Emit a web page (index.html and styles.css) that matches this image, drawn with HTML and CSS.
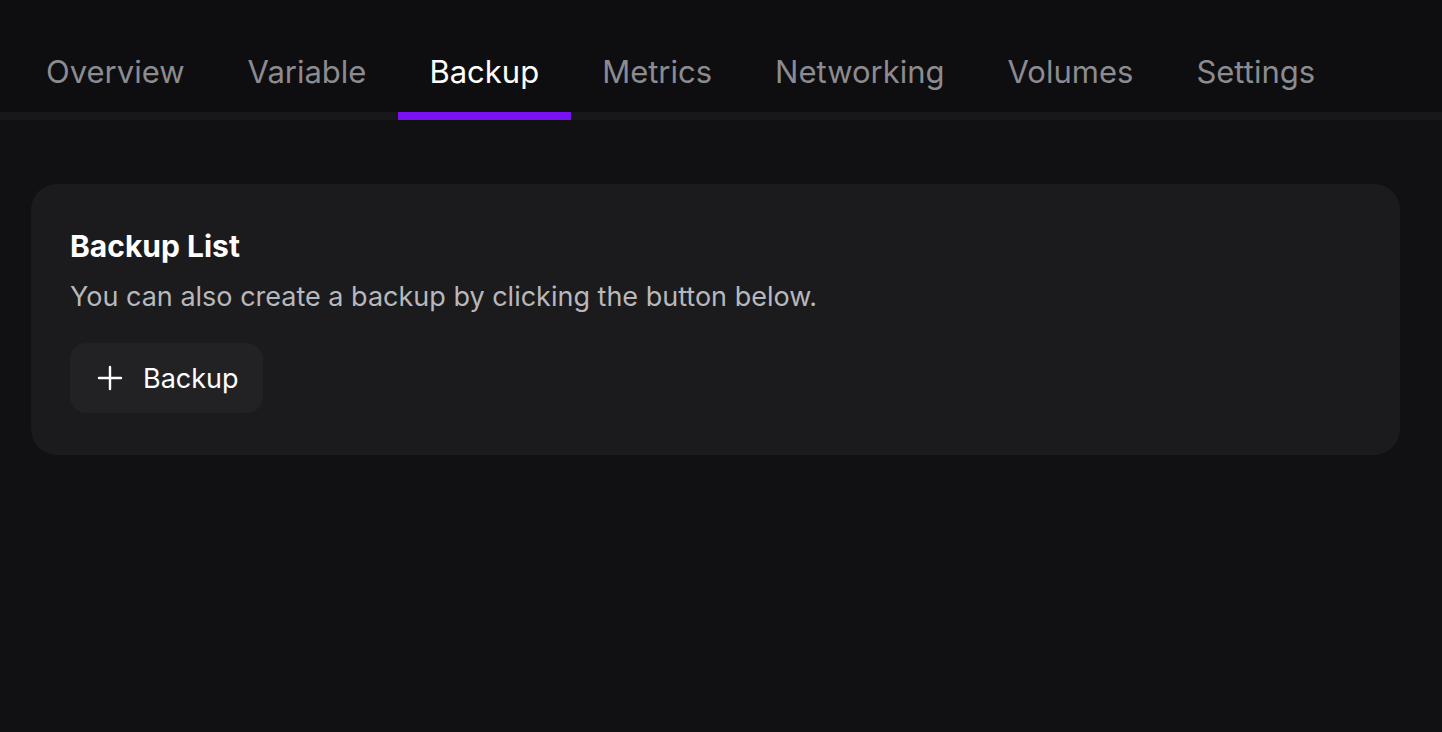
FILE: index.html
```html
<!DOCTYPE html>
<html lang="en">
<head>
  <meta charset="UTF-8">
  <meta name="viewport" content="width=device-width, initial-scale=1.0">
  <title>Backup</title>
  <link rel="stylesheet" href="styles.css">
</head>
<body>
  <!-- Service tabs -->
  <nav class="tabs">
    <a class="tab">Overview</a>
    <a class="tab">Variable</a>
    <a class="tab active">Backup</a>
    <a class="tab">Metrics</a>
    <a class="tab">Networking</a>
    <a class="tab">Volumes</a>
    <a class="tab">Settings</a>
  </nav>

  <!-- Backup panel -->
  <main class="content">
    <section class="card">
      <h2>Backup List</h2>
      <p>You can also create a backup by clicking the button below.</p>
      <button class="add-btn">
        <svg width="26" height="26" viewBox="0 0 26 26" fill="none" stroke="currentColor" stroke-width="2.4" stroke-linecap="round">
          <path d="M13 2v22M2 13h22"/>
        </svg>
        Backup
      </button>
    </section>
  </main>
</body>
</html>
```

FILE: styles.css
```css
/* General Styles */
body {
  font-family: 'Inter', 'Noto Sans', sans-serif;
  margin: 0;
  padding: 0;
  background: #111114;
  color: #fff;
  min-height: 100vh;
}

/* Tabs */
.tabs {
  display: flex;
  padding: 0 0 0 15px;
  height: 112px;
  background: #0e0e11;
  border-bottom: 8px solid #18181b;
}

.tab {
  display: flex;
  align-items: center;
  padding: 30px 32px 0 31px;
  font-size: 31px;
  color: #8b8b90;
  cursor: pointer;
  position: relative;
}

.tab.active {
  color: #fff;
}

.tab.active::after {
  content: "";
  position: absolute;
  left: 0;
  right: 0;
  bottom: -8px;
  height: 8px;
  background: #7a11f5;
}

/* Card */
.content {
  padding: 64px 42px 0 31px;
}

.card {
  background: #1b1b1e;
  border-radius: 26px;
  padding: 44px 39px 42px;
}

.card h2 {
  margin: 0;
  font-size: 30px;
  line-height: 36px;
  font-weight: 700;
  color: #fff;
}

.card p {
  margin: 16px 0 0;
  font-size: 27px;
  line-height: 34px;
  color: #b8b8bc;
}

/* Button */
.add-btn {
  margin-top: 29px;
  display: inline-flex;
  align-items: center;
  gap: 20px;
  height: 70px;
  padding: 0 24px 0 27px;
  background: #222225;
  border: none;
  border-radius: 16px;
  color: #fff;
  font-family: inherit;
  font-size: 27px;
  cursor: pointer;
}
```
